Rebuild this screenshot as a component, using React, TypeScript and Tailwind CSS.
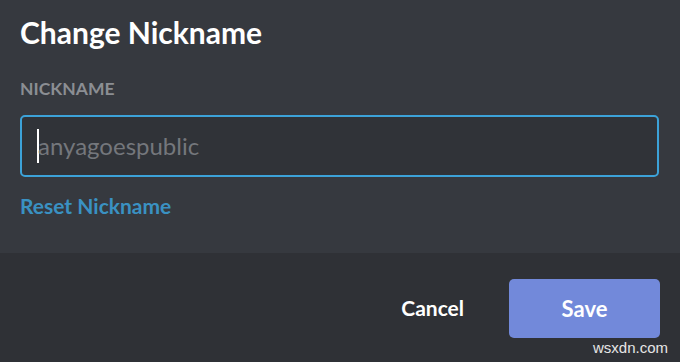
import React from 'react';

const font = { fontFamily: 'Lato, "Open Sans", sans-serif' };

export default function App() {
  return (
    <div className="w-[680px] h-[362px] flex flex-col overflow-hidden" style={font}>
      {/* Body */}
      <div className="flex-1 bg-[#36393f] px-5 pt-[14px]">
        <h2 className="text-[30px] leading-[36px] font-bold text-white">Change Nickname</h2>

        <div className="mt-[29px] text-[17.5px] leading-[20px] font-bold uppercase text-[#8b8e93]">
          Nickname
        </div>

        <div className="mt-[16px] h-[62px] w-[639px] rounded-[5px] border-2 border-[#3ca2d8] bg-[#303338] flex items-center pl-[15px]">
          <span className="w-[2px] h-[34px] bg-white" />
          <span className="-ml-[1px] text-[24px] text-[#74777c]">anyagoespublic</span>
        </div>

        <div className="mt-[17px] text-[21px] leading-[24px] font-bold text-[#3a91c2]">
          Reset Nickname
        </div>
      </div>

      {/* Footer */}
      <div className="relative h-[109px] bg-[#2f3136] flex items-start justify-end pr-5 pt-[26px]">
        <button className="mt-[9px] mr-[45px] text-[21px] leading-[40px] font-bold text-white">
          Cancel
        </button>
        <button className="w-[151px] h-[59px] rounded-[5px] bg-[#7289da] text-[22px] font-bold text-white">
          Save
        </button>
        <span
          className="absolute right-[12px] bottom-[3px] text-[15px] text-[#e6e6e6]"
          style={{ fontFamily: '"Liberation Sans", sans-serif' }}
        >
          wsxdn.com
        </span>
      </div>
    </div>
  );
}
